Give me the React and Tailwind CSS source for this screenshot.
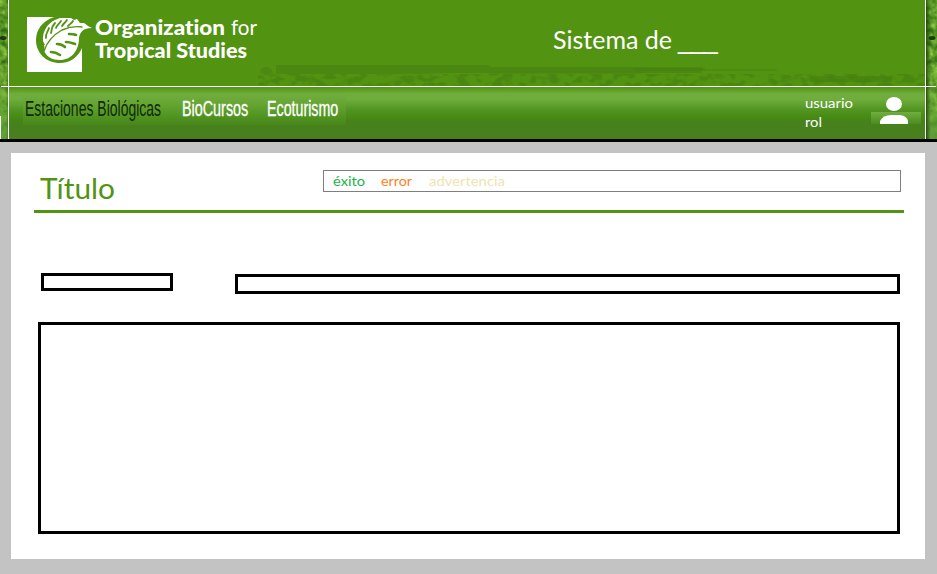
const BAR = 'bg-[linear-gradient(#529312_0px,#6fae3d_7px,#6fae3d_12px,#4f9220_24px,#488b12_30px,#47811c_34px,#47801c_52px)]';

function Fit({ children, className, width }) {
  return (
    <svg className={'block shrink-0 overflow-visible [font-variant-ligatures:none] ' + className} width={width} height="24">
      {children}
    </svg>
  );
}

function Leaf() {
  return (
    <svg className="h-[55px] w-[66px] shrink-0" viewBox="0 0 66 55">
      <path fill="#fff" d="M0 0h27C15 4 9 13 9 23c0 13 10 23 24 23 10 0 18-6 22-15v24H0z" />
      <path fill="#fff" d="M18 28l-2-4C15 13 22 4 33 1l5 0 6 0 3 2 3-1 3 4 4 0c3 2 5 4 8 5-9 0-12 4-13 10 0 13-8 22-19 22-8 0-13-3-16-9 0-2 1-4 0-6z" />
      <g fill="none" stroke="#529312" strokeLinecap="round">
        <path strokeWidth="1.4" d="M17 34C20 25 26 18 35 13c7-3 13-4 20-3" />
        <path strokeWidth="1.8" d="M22 11c-1 4-4 6-3 10M28 6c-4 4-3 7-4 10M34 4c-2 3-4 4-5 7M40 3c-1 2-4 4-5 6M46 4c-1 2-3 3-5 5" />
        <path strokeWidth="2.6" d="M24 35c3 0 6 1 9 3M30 27c4 0 6 1 8 3M39 25c4 0 6 1 9 2M42 17c3 0 5 0 7 1" />
      </g>
    </svg>
  );
}

function Foliage() {
  return (
    <svg className="absolute left-[249px] top-[62px]" width="667" height="24">
      <defs>
        <filter id="leaves" x="0" y="0" width="100%" height="100%" colorInterpolationFilters="sRGB">
          <feTurbulence type="fractalNoise" baseFrequency=".09 .14" numOctaves="2" seed="8" />
          <feColorMatrix values="0 0 0 0 .27 0 0 0 0 .49 0 0 0 0 .06 7 0 0 0 -3.2" />
        </filter>
      </defs>
      <rect y="12" x="0" width="667" height="12" filter="url(#leaves)" opacity=".5" />
      <path fill="#4a8413" opacity=".75" d="M18 3h214v2h212v6H186l-20 1H18z" />
      <path fill="#4a8413" opacity=".4" d="M232 5h152v7H232z" />
      <path fill="#4a8413" opacity=".7" d="M2 10q1-5 7-5 5 1 6 6l-5 1-1 2-3-2z" />
      <path fill="#46800f" opacity=".6" d="M376 6h71v3h-71zM552 14h82v6h-82z" />
      <path fill="#46800f" opacity=".35" d="M447 7h72v2h-72z" />
    </svg>
  );
}

function Edge({ side }) {
  const id = 'grain-' + side;
  const left = side === 'left';
  return (
    <svg className={left ? 'h-[139px] w-[8px] shrink-0' : 'h-[139px] w-[11px] shrink-0'}>
      <defs>
        <filter id={id} x="0" y="0" width="100%" height="100%" colorInterpolationFilters="sRGB">
          <feTurbulence type="fractalNoise" baseFrequency=".14" numOctaves="3" seed="4" />
          <feColorMatrix values=".6 0 0 0 .08 .6 0 0 0 .32 .3 0 0 0 .02 0 0 0 0 1" />
        </filter>
        <linearGradient id={id + '-shade'} x1={left ? 1 : 0} x2={left ? 0 : 1}>
          <stop stopColor="#173808" stopOpacity=".8" />
          <stop offset=".45" stopColor="#27500e" stopOpacity="0" />
        </linearGradient>
        <linearGradient id={id + '-low'} x2="0" y2="1">
          <stop stopColor="#6fae3d" stopOpacity=".2" />
          <stop offset="1" stopColor="#5a9a35" stopOpacity=".9" />
        </linearGradient>
      </defs>
      <rect width="11" height="139" filter={'url(#' + id + ')'} />
      <rect y="87" width="11" height="52" fill={'url(#' + id + '-low)'} />
      <ellipse cx={left ? 3 : 6} cy="38" rx="3.5" ry="2" fill="#102a08" opacity=".85" />
      <rect width="11" height="139" fill={'url(#' + id + '-shade)'} />
      {left ? <rect y="116" width="1" height="23" fill="#fff" /> : null}
      <rect x={left ? 1 : 0} y="86" width="10" height="1" fill="#fff" />
    </svg>
  );
}

function Header() {
  return (
    <header className="flex h-[142px] border-b-[3px] border-black">
      <Edge side="left" />
      <div className="relative flex w-[918px] flex-col border-x border-white bg-[#529312]">
        <Foliage />
        <div className="flex h-[86px] pl-[18px] pt-[17px]">
          <Leaf />
          <div className="ml-[2px] flex flex-col">
            <Fit width="164" className="font-['Lato'] text-[21px] font-black">
              <text x="0" y="18" fill="#fff" textLength="130" lengthAdjust="spacingAndGlyphs">Organization</text>
              <text x="136" y="18" fill="#fff" fontWeight="400" textLength="26" lengthAdjust="spacingAndGlyphs">for</text>
            </Fit>
            <Fit width="164" className="font-['Lato'] text-[21px] font-black">
              <text x="0" y="17" fill="#fff" textLength="152" lengthAdjust="spacingAndGlyphs">Tropical Studies</text>
            </Fit>
          </div>
          <Fit width="170" className="ml-[294px] mt-[10px] font-['Lato'] text-[25px]">
            <text x="0" y="22" fill="#fff" textLength="119" lengthAdjust="spacingAndGlyphs">Sistema de</text>
            <text transform="translate(125 22) scale(1.06 1)" fill="#fff" letterSpacing="-1.5" textLength="36" lengthAdjust="spacingAndGlyphs" className="font-['Liberation_Sans']">___</text>
          </Fit>
        </div>
        <nav className={'flex h-[53px] border-t border-white ' + BAR}>
          <div className="ml-[14px] mt-[8px] flex h-[30px] w-[323px] bg-[linear-gradient(#6fae3d,#66a532_30%,#4f9220_75%,#488619)]">
            <Fit width="323" className="font-['Liberation_Sans'] text-[20px]">
              <text transform="translate(2 21) scale(.72 1.06)" fill="#102b08" textLength="189" lengthAdjust="spacingAndGlyphs">Estaciones Biológicas</text>
              <text transform="translate(159 21) scale(.72 1.06)" fill="#fff" stroke="#fff" strokeWidth=".3" textLength="92" lengthAdjust="spacingAndGlyphs">BioCursos</text>
              <text transform="translate(244 21) scale(.72 1.06)" fill="#fff" stroke="#fff" strokeWidth=".3" textLength="99" lengthAdjust="spacingAndGlyphs">Ecoturismo</text>
            </Fit>
          </div>
          <div className="ml-[459px] mt-[7px] flex w-[66px] flex-col font-['Lato'] text-[13.5px] leading-[19px] text-white">
            <Fit width="66" className="h-[19px]"><text y="14" fill="#fff" textLength="48" lengthAdjust="spacingAndGlyphs">usuario</text></Fit>
            <Fit width="66" className="h-[19px]"><text y="14" fill="#fff" textLength="17" lengthAdjust="spacingAndGlyphs">rol</text></Fit>
          </div>
          <svg className="mt-[9px] h-[29px] w-[50px]" viewBox="0 0 50 29">
            <defs>
              <linearGradient id="strip" x2="0" y2="1">
                <stop stopColor="#70ae3d" />
                <stop offset="1" stopColor="#4b8b20" />
              </linearGradient>
            </defs>
            <rect y="16" width="50" height="12" fill="url(#strip)" />
            <ellipse cx="23" cy="8" rx="8" ry="7" fill="#fff" />
            <path fill="#fff" d="M9 28v-3q3-6 11-6h9q7 1 8 6v3z" />
          </svg>
        </nav>
      </div>
      <Edge side="right" />
    </header>
  );
}

export default function App() {
  return (
    <div className="h-[574px] w-[937px] overflow-hidden bg-[#c3c3c3]">
      <Header />
      <main className="ml-[11px] mt-[11px] flex h-[406px] w-[914px] flex-col bg-white">
        <div className="ml-[23px] flex h-[60px] w-[870px] border-b-[3px] border-[#529312] font-['Lato']">
          <Fit width="77" className="ml-[6px] mt-[22px] text-[28.5px]">
            <text x="0" y="24" fill="#529312" textLength="75" lengthAdjust="spacingAndGlyphs">Título</text>
          </Fit>
          <div className="ml-[206px] mt-[17px] h-[22px] w-[578px] border border-[#7f7f7f]">
            <Fit width="200" className="text-[13.5px]">
              <text x="9" y="15" fill="#22b14c" textLength="32" lengthAdjust="spacingAndGlyphs">éxito</text>
              <text x="57" y="15" fill="#ff7f27" textLength="31" lengthAdjust="spacingAndGlyphs">error</text>
              <text x="105" y="15" fill="#efe4b0" textLength="76" lengthAdjust="spacingAndGlyphs">advertencia</text>
            </Fit>
          </div>
        </div>
        <div className="ml-[30px] mt-[60px] flex">
          <div className="h-[18px] w-[132px] border-[3px] border-black" />
          <div className="ml-[62px] mt-px h-[20px] w-[665px] border-[3px] border-black" />
        </div>
        <div className="ml-[27px] mt-[28px] h-[212px] w-[862px] border-[3px] border-black" />
      </main>
    </div>
  );
}
